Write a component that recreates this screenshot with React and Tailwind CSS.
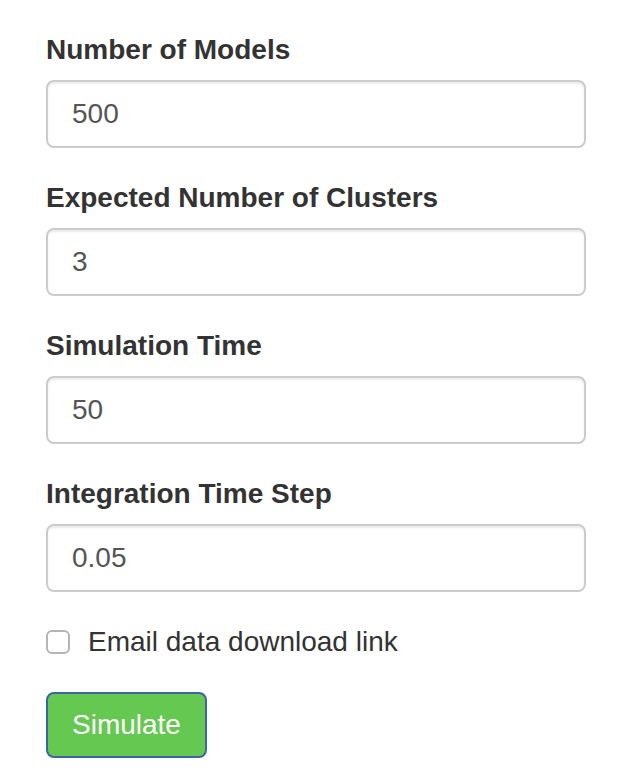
export default function App() {
  const fields = [
    { label: 'Number of Models', value: '500' },
    { label: 'Expected Number of Clusters', value: '3' },
    { label: 'Simulation Time', value: '50' },
    { label: 'Integration Time Step', value: '0.05' },
  ];

  return (
    <div
      className="min-h-screen bg-white pt-[30px] pl-[46px] pr-[38px] text-[#333]"
      style={{ fontFamily: '"Liberation Sans", Arial, sans-serif' }}
    >
      {fields.map((f) => (
        <div key={f.label} className="mb-[30px]">
          <label className="block mb-[10px] text-[28px] leading-[40px] font-bold">{f.label}</label>
          <input
            type="text"
            defaultValue={f.value}
            className="block w-full h-[68px] px-[24px] py-[12px] text-[28px] leading-[40px] text-[#555] bg-white border-2 border-[#ccc] rounded-[8px] shadow-[inset_0_2px_2px_rgba(0,0,0,0.075)] outline-none"
          />
        </div>
      ))}

      <div className="mb-[30px] flex items-center h-[40px]">
        <span className="w-[24px] h-[24px] border-2 border-[#b5b5b5] rounded-[6px] bg-white shrink-0" />
        <span className="ml-[18px] text-[28px] leading-[40px]">Email data download link</span>
      </div>

      <button className="h-[66px] px-[24px] text-[28px] leading-[40px] text-white bg-[#65c951] border-2 border-[#3b66a6] rounded-[8px]">
        Simulate
      </button>
    </div>
  );
}
